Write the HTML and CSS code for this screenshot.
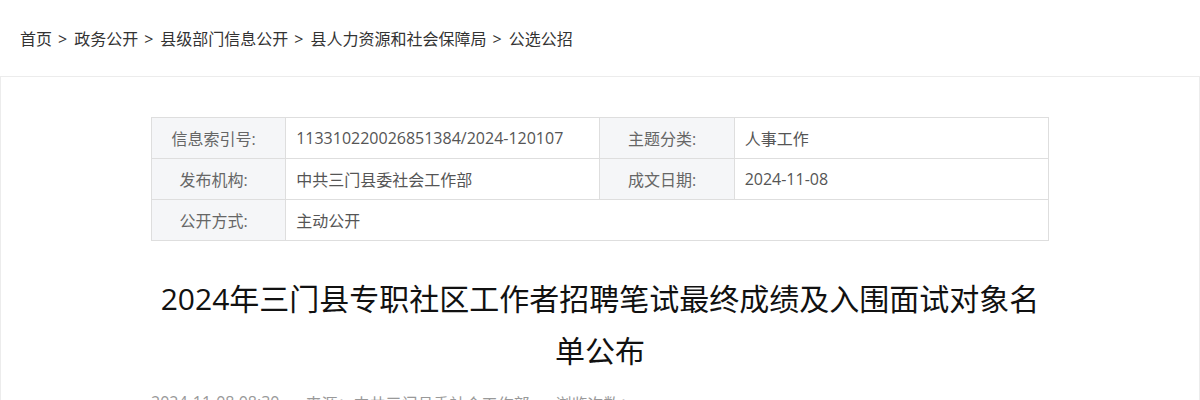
FILE: index.html
```html
<!DOCTYPE html>
<html lang="zh-CN">
<head>
<meta charset="utf-8">
<title>公选公招</title>
<link rel="stylesheet" href="styles.css">
</head>
<body>
<nav class="crumbs">
  <a href="#">首页</a><span class="sep">&gt;</span>
  <a href="#">政务公开</a><span class="sep">&gt;</span>
  <a href="#">县级部门信息公开</a><span class="sep">&gt;</span>
  <a href="#">县人力资源和社会保障局</a><span class="sep">&gt;</span>
  <a href="#">公选公招</a>
</nav>
<main class="box">
  <div class="inner">
    <table class="meta">
      <tr>
        <th>信息索引号:</th>
        <td class="v1">113310220026851384/2024-120107</td>
        <th>主题分类:</th>
        <td class="v2">人事工作</td>
      </tr>
      <tr>
        <th>发布机构:</th>
        <td>中共三门县委社会工作部</td>
        <th>成文日期:</th>
        <td>2024-11-08</td>
      </tr>
      <tr>
        <th>公开方式:</th>
        <td colspan="3">主动公开</td>
      </tr>
    </table>
    <h1 class="title">2024年三门县专职社区工作者招聘笔试最终成绩及入围面试对象名单公布</h1>
    <div class="info">
      <span>2024-11-08 08:30</span>
      <span>来源：中共三门县委社会工作部</span>
      <span>浏览次数：</span>
    </div>
  </div>
</main>
</body>
</html>
```

FILE: styles.css
```css
* { box-sizing: border-box; }
html, body { margin: 0; padding: 0; background: #fff; }
body {
  font-family: "Open Sans", "Noto Sans CJK SC", sans-serif;
  color: #333;
}
.crumbs {
  height: 76px;
  padding: 0 0 0 20px;
  display: flex;
  align-items: center;
  font-size: 16px;
  line-height: 20px;
  padding-top: 2px;
}
.crumbs a { color: #333; text-decoration: none; }
.crumbs .sep { color: #333; margin: 0 7px 0 6px; }
.box {
  border: 1px solid #ececec;
  border-bottom: none;
  min-height: 330px;
}
.inner {
  width: 898px;
  margin: 0 auto;
  padding-top: 40px;
}
.meta {
  width: 898px;
  border-collapse: collapse;
  font-size: 16px;
  color: #555;
}
.meta th, .meta td {
  border: 1px solid #dedede;
  height: 41px;
  font-weight: normal;
  padding: 0;
}
.meta th {
  width: 134px;
  background: #f5f6f8;
  color: #666;
  text-align: center;
  padding-right: 10px;
}
.meta td {
  padding-left: 10px;
  text-align: left;
}
.meta .v1, .meta .v2 { width: 314px; }
.title {
  margin: 32px 0 0;
  font-size: 30px;
  line-height: 52px;
  font-weight: normal;
  text-align: center;
  color: #111;
}
.info {
  margin-top: 14px;
  display: flex;
  gap: 26px;
  font-size: 16px;
  color: #999;
}
```
